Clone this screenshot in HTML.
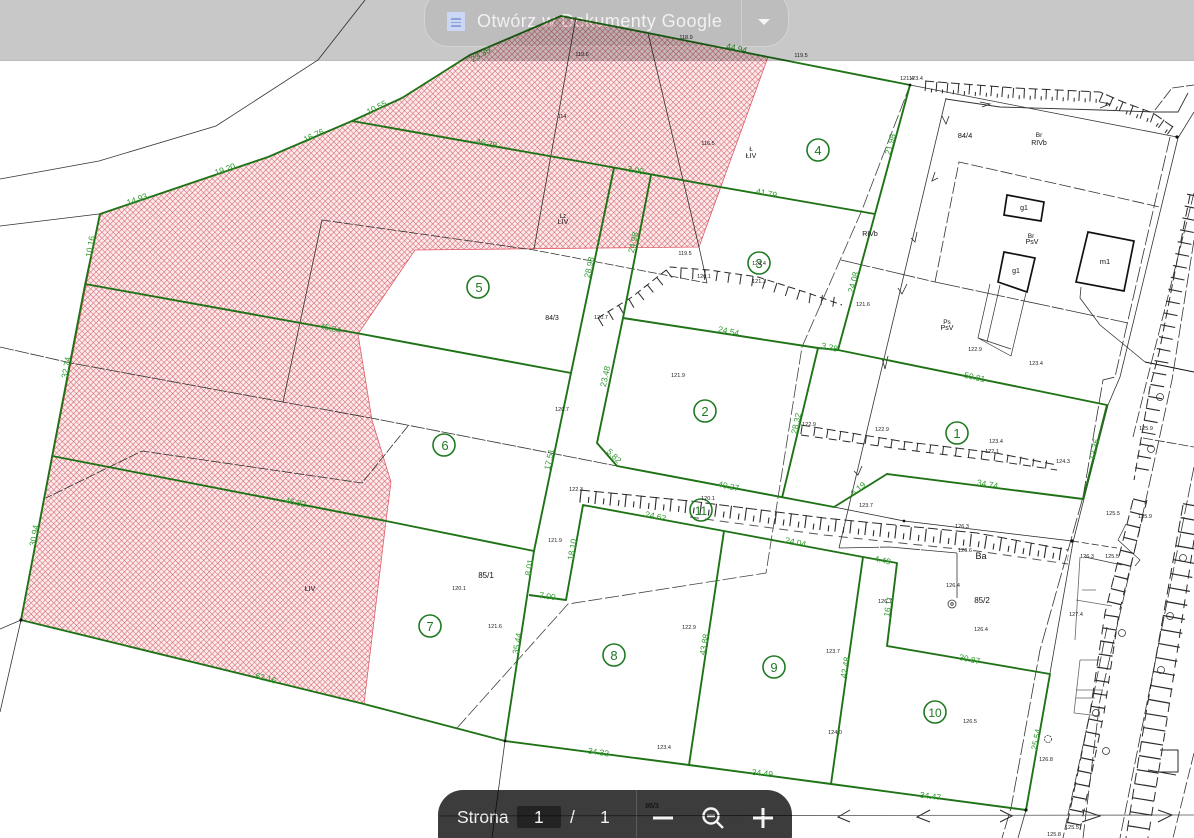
<!DOCTYPE html>
<html><head><meta charset="utf-8">
<style>
html,body{margin:0;padding:0;background:#fff}
#p{position:relative;width:1194px;height:838px;overflow:hidden;background:#fff;font-family:"Liberation Sans",sans-serif;isolation:isolate}
#bar{position:absolute;left:0;top:0;width:1194px;height:60px;background:#c8c8c8;border-bottom:1px solid #bcbcbc}
#pill{position:absolute;left:424px;top:-10px;width:363px;height:55px;border:1px solid #d4d4d4;border-radius:24px;background:#bdbdbd;box-sizing:content-box}
#dv{position:absolute;left:741px;top:0;width:1px;height:45px;background:#cfcfcf}
#doc{position:absolute;left:447px;top:12px;width:18px;height:19px;background:#ccd6f5;border-radius:1px}
#doc i{position:absolute;left:4px;width:10px;height:1.5px;background:#8ea2dc}
#t{position:absolute;left:477px;top:10px;font-size:18px;line-height:22px;color:#f1f1f1;white-space:nowrap;letter-spacing:.45px}
#car{position:absolute;left:758px;top:19px;width:0;height:0;border-left:6.5px solid transparent;border-right:6.5px solid transparent;border-top:6px solid #f6f6f6}
#bp{position:absolute;left:438px;top:790px;width:354px;height:70px;background:#3c3c3c;border-radius:25px}
#bp span{position:absolute;color:#f4f4f4;font-size:17.5px;line-height:22px;white-space:nowrap}
#box{position:absolute;left:79px;top:16px;width:44px;height:22px;background:#232323;border-radius:2px}
#bdv{position:absolute;left:198px;top:0;width:1px;height:48px;background:#5c5c5c}
#ic{position:absolute;left:0;top:0}
#map{position:absolute;left:0;top:0;mix-blend-mode:multiply;filter:blur(.35px)}
#map text{font-family:"Liberation Sans",sans-serif}
.g text{fill:#2f9a2f;font-size:8.5px;text-anchor:middle}
.k text{fill:#222;font-size:5.5px;text-anchor:middle}
.b text{fill:#111;font-size:8px;text-anchor:middle}
.n circle{fill:none;stroke:#1e7a22;stroke-width:1.6}
.n text{fill:#1e7a22;font-size:13px;text-anchor:middle}
</style></head><body>
<div id="p">
<div id="bar"></div>
<div id="pill"></div>
<div id="dv"></div>
<div id="doc"><i style="top:6px"></i><i style="top:9.5px"></i><i style="top:13px"></i></div>
<div id="t">Otwórz w Dokumenty Google</div>
<div id="car"></div>
<div id="bp">
<span style="left:19px;top:16px">Strona</span>
<div id="box"></div>
<span style="left:96px;top:16px">1</span>
<span style="left:132px;top:16px">/</span>
<span style="left:162px;top:16px">1</span>
<div id="bdv"></div>
<svg id="ic" width="354" height="48" viewBox="0 0 354 48">
<path d="M215 28h20" stroke="#f4f4f4" stroke-width="3" fill="none"/>
<circle cx="273" cy="26" r="7.5" stroke="#f4f4f4" stroke-width="2.4" fill="none"/>
<path d="M279 32l6 6M269 26h8" stroke="#f4f4f4" stroke-width="2.4" fill="none"/>
<path d="M315 28h20M325 18v20" stroke="#f4f4f4" stroke-width="3" fill="none"/>
</svg>
</div>

<svg id="map" width="1194" height="838" viewBox="0 0 1194 838" xmlns="http://www.w3.org/2000/svg">
<defs>
<pattern id="h" width="4" height="4" patternUnits="userSpaceOnUse" patternTransform="rotate(45)">
<rect width="4" height="4" fill="#fdeaea"/>
<path d="M0 0H4M0 0V4" stroke="#d4606e" stroke-width="1.1" fill="none"/>
</pattern>
</defs>

<!-- hatched area -->
<path d="M100 214L268 157L352 121L402 98L470 55L561 16L648 33L768 57L699 247L415 250L358 334L372 420L391 482L386 521L364 704L21 620Z" fill="url(#h)" stroke="#e0505c" stroke-width=".7"/>

<!-- thin lines -->
<g fill="none" stroke="#333" stroke-width=".8">
<path d="M365 0L318 60L216 126L99 161L0 179"/>
<path d="M99 214L0 226"/>
<path d="M21 620L0 629M21 620L0 712"/>
<path d="M505 741L492 838"/>
<path d="M322 220L283 402"/>
<path d="M576 17L534 249"/>
<path d="M648 33L699 247L707 283"/>
<path d="M0 347L71 363L283 402L371 418L617 466" stroke-dasharray="14 1.5"/>
<path d="M322 220L534 250L707 283" stroke-dasharray="9 2"/>
<path d="M841 260L935 282L1128 323" stroke-dasharray="30 2 12 2"/>
<path d="M408 426L362 483L142 451L46 498" stroke-dasharray="10 2"/>
<path d="M457 728L568 604L766 573L802 347L862 210L910 85" stroke="#444" stroke-dasharray="14 3"/>
<path d="M910 85L1177 137"/>
<path d="M946 98L839 548"/>
<path d="M946 99L1000 107L1100 110L1155 112L1178 112L1188 93" stroke-width=".9"/>
<path d="M1145 362L1194 372" stroke="#111" stroke-width="1.1"/>
<path d="M1081 287L1080 298L1100 325L1122 343L1145 362"/>
<path d="M440 816L1194 815" stroke="#555"/>
<path d="M839 548L890 547L957 553" stroke-dasharray="40 1"/>
<path d="M957 553V598"/>
<path d="M834 507L904 521L1072 541" stroke="#222"/>
<path d="M1072 541L1117 548" stroke-dasharray="7 3"/>
<path d="M1085 557L1122 565"/>
<!-- double dashed boundary -->
<path d="M1178 138L1120 377L1108 405L1073 542L1050 673L1026 810L1018 838"/>
<path d="M1170 137L1115 377L1103 380L1083 497L1040 650L1011 808L1002 838" stroke-dasharray="16 3"/>
<!-- road edge dashes -->
<path d="M1194 193L1147 380L1133 437" stroke-dasharray="12 3"/>
<path d="M1194 240L1172 380L1140 527L1100 700L1083 838" stroke-dasharray="14 3"/>
<path d="M1107 627L1090 713L1063 838" stroke-dasharray="12 3"/>
<path d="M1194 467L1120 838" stroke-dasharray="14 3"/>
<path d="M1194 753L1173 838" stroke-dasharray="12 3"/>
<path d="M1143 438L1194 447" stroke-dasharray="10 2"/>
<path d="M1155 110L1172 88L1194 85" stroke-dasharray="12 2"/>
<path d="M1178 138L1194 112"/>
<path d="M1080 557L1075 640M1076 600L1112 606M1074 713L1080 660M1074 713L1100 716" stroke="#666"/>
<path d="M1080 660H1100M1076 690H1102M1076 698H1095M1082 590H1096" stroke="#666"/>
<path d="M1126 524L1118 540L1140 560L1135 566" stroke-width=".7"/>
<!-- dashed building outline -->
<path d="M935 282L959 162L1160 207" stroke-dasharray="12 3"/>
<!-- small rect -->
<path d="M990 284L978 338L1011 356L1026 293M1000 285L987 342M978 338L1011 349" stroke-width=".7"/>
<circle cx="952" cy="604" r="4"/>
<circle cx="952" cy="604" r="1.3"/>
<circle cx="1048" cy="739" r="3.5" stroke-dasharray="2 1"/>
<circle cx="1122" cy="633" r="3.5"/>
<circle cx="1106" cy="751" r="3.5"/>
<circle cx="1096" cy="713" r="3.5"/>
<circle cx="1160" cy="397" r="3.5"/>
<circle cx="1151" cy="449" r="3.5"/>
<circle cx="1183" cy="558" r="3.5"/>
<circle cx="1170" cy="616" r="3.5"/>
<circle cx="1161" cy="670" r="3.5"/>
</g>

<!-- kerbs : line + U ticks -->
<g fill="none" stroke="#2a2a2a">
<path d="M925 81L1015 88L1100 92L1123 102L1153 113L1173 127" stroke-width="1" stroke-dasharray="9 4"/>
<path d="M925 86L1015 93L1100 97L1123 107L1153 118L1173 132" stroke-width="10" stroke-dasharray="1 10"/>
<path d="M925 90L1015 97L1100 101L1123 111L1153 122L1173 136" stroke-width="4" stroke-dasharray="1 10" stroke-dashoffset="5"/>
<path d="M598 318L632 297L670 267L709 270L758 277L808 293L842 305" stroke-width="1" stroke-dasharray="7 4"/>
<path d="M600 322L632 303L670 273L709 275L758 282L808 298L842 303" stroke-width="10" stroke-dasharray="1 11"/>
<path d="M801 425L900 441L996 453L1057 465" stroke-width="1" stroke-dasharray="9 4"/>
<path d="M801 430L900 445L996 457L1057 466" stroke-width="8" stroke-dasharray="1 12"/>
<path d="M801 435L900 449L996 461L1057 470" stroke-width="1" stroke-dasharray="8 6"/>
<path d="M580 490L690 501L824 518L977 533L1068 550" stroke-width="1" stroke-dasharray="10 4"/>
<path d="M580 496L690 507L824 524L977 541L1068 555" stroke-width="13" stroke-dasharray="1.1 14"/>
<path d="M580 499L690 510L824 528L977 544L1068 558" stroke-width="6" stroke-dasharray="1.1 14" stroke-dashoffset="7"/>
<path d="M690 517L824 535L977 551L1068 564" stroke-width="1" stroke-dasharray="9 6" opacity=".8"/>
<!-- road strip blocks -->
<path d="M1194 195L1163 353L1157 387L1140 480" stroke-width="14" stroke-dasharray="1.1 11"/>
<path d="M1190 195L1159 353L1150 387L1134 480" stroke-width="1" stroke-dasharray="9 4"/>
<path d="M1140 500L1112 613L1097 713L1073 830" stroke-width="14" stroke-dasharray="1.2 12"/>
<path d="M1133 500L1105 613L1090 713L1066 830" stroke-width="1" stroke-dasharray="10 6"/>
<path d="M1147 500L1119 613L1104 713L1080 830" stroke-width="1" stroke-dasharray="8 7"/>
<path d="M1194 505L1157 713L1137 838" stroke-width="22" stroke-dasharray="1.2 13"/>
<path d="M1183 505L1146 713L1126 838" stroke-width="1" stroke-dasharray="11 5"/>
<path d="M1194 540L1168 713L1148 838" stroke-width="1" stroke-dasharray="9 6"/>
<path d="M1160 750H1178V772H1160M1148 770L1176 775" stroke-width="1"/>
<!-- arrows on axis -->
<path d="M850 810L838 817L850 822M930 810L917 817L930 822M1000 810L1012 816L1000 822M1082 810L1100 816L1082 822M1158 810L1172 815L1158 822" stroke-width="1"/>
<path d="M942 116L946 124L949 116M935 172L932 181L938 178M917 232L915 242L911 238M907 284L902 294L898 288M888 356L885 369L882 358M862 466L858 475L854 471" stroke-width=".8"/>
<path d="M980 102L990 104L982 107M1100 102L1110 104L1100 108" stroke-width=".8"/>
</g>

<!-- buildings -->
<g fill="none" stroke="#111" stroke-width="1.7">
<path d="M1007 195L1044 202L1041 221L1004 215Z"/>
<path d="M1004 252L1035 258L1027 292L998 282Z"/>
<path d="M1088 232L1134 241L1124 291L1076 282Z"/>
</g>

<!-- green plot lines -->
<g fill="none" stroke="#1f7316" stroke-width="1.9" stroke-linejoin="round">
<path d="M21 620L52 457L85 285L100 214L268 157L352 121L402 98L470 55L561 16L648 33L768 57L910 85"/>
<path d="M352 121L600 165L720 187L875 214"/>
<path d="M85 284L356 333L571 373"/>
<path d="M52 456L386 521L534 551"/>
<path d="M21 620L364 704L505 741L689 765L831 784L1026 810L1050 674L887 646L897 563L863 557L724 531L583 505L566 600L529 595"/>
<path d="M910 85L875 214L838 350"/>
<path d="M623 318L818 348L838 350L1107 405L1083 499L887 474L834 507L617 466L597 443L623 318L651 175"/>
<path d="M818 348L782 498"/>
<path d="M614 168L571 373L534 551L505 741"/>
<path d="M724 531L689 765"/>
<path d="M863 557L831 784"/>
</g>
<g fill="#111"><circle cx="21" cy="620" r="1.6"/><circle cx="505" cy="741" r="1.4"/><circle cx="910" cy="85" r="1.4"/><circle cx="1026" cy="810" r="1.6"/><circle cx="1072" cy="541" r="1.6"/><circle cx="1177" cy="137" r="1.6"/><circle cx="904" cy="521" r="1.4"/></g>

<!-- green measurements -->
<g class="g">
<text transform="translate(482,57) rotate(-30)">23.35</text>
<text transform="translate(378,110) rotate(-27)">10.55</text>
<text transform="translate(315,138) rotate(-25)">16.76</text>
<text transform="translate(226,172) rotate(-20)">19.20</text>
<text transform="translate(138,202) rotate(-20)">14.93</text>
<text transform="translate(93,247) rotate(-80)">10.16</text>
<text transform="translate(69,368) rotate(-80)">32.74</text>
<text transform="translate(37,536) rotate(-80)">30.94</text>
<text transform="translate(486,146) rotate(11)">46.29</text>
<text transform="translate(330,331) rotate(12)">45.94</text>
<text transform="translate(295,505) rotate(12)">46.82</text>
<text transform="translate(265,681) rotate(15)">62.16</text>
<text transform="translate(598,755) rotate(8)">34.32</text>
<text transform="translate(762,776) rotate(7)">34.49</text>
<text transform="translate(930,799) rotate(8)">34.47</text>
<text transform="translate(736,51) rotate(12)">44.94</text>
<text transform="translate(893,145) rotate(-75)">21.98</text>
<text transform="translate(766,196) rotate(11)">41.79</text>
<text transform="translate(635,173) rotate(11)">3.00</text>
<text transform="translate(636,243) rotate(-78)">24.98</text>
<text transform="translate(592,268) rotate(-78)">28.98</text>
<text transform="translate(856,283) rotate(-75)">24.08</text>
<text transform="translate(728,334) rotate(12)">24.54</text>
<text transform="translate(829,350) rotate(12)">3.28</text>
<text transform="translate(974,380) rotate(12)">50.81</text>
<text transform="translate(608,377) rotate(-78)">23.48</text>
<text transform="translate(799,424) rotate(-78)">28.32</text>
<text transform="translate(1097,450) rotate(-76)">13.35</text>
<text transform="translate(612,458) rotate(45)">5.82</text>
<text transform="translate(728,489) rotate(12)">40.27</text>
<text transform="translate(860,491) rotate(-40)">6.19</text>
<text transform="translate(987,487) rotate(10)">34.74</text>
<text transform="translate(552,460) rotate(-78)">17.51</text>
<text transform="translate(655,519) rotate(12)">24.62</text>
<text transform="translate(795,545) rotate(12)">24.04</text>
<text transform="translate(882,563) rotate(12)">4.49</text>
<text transform="translate(575,550) rotate(-80)">18.10</text>
<text transform="translate(532,568) rotate(-80)">8.01</text>
<text transform="translate(547,599) rotate(8)">7.00</text>
<text transform="translate(891,607) rotate(-80)">16.11</text>
<text transform="translate(520,644) rotate(-80)">35.44</text>
<text transform="translate(707,645) rotate(-80)">43.88</text>
<text transform="translate(848,668) rotate(-80)">42.48</text>
<text transform="translate(969,662) rotate(12)">30.87</text>
<text transform="translate(1039,740) rotate(-78)">25.54</text>
</g>

<!-- circled numbers -->
<g class="n">
<circle cx="818" cy="150" r="11"/><text x="818" y="155">4</text>
<circle cx="759" cy="263" r="11"/><text x="759" y="268">3</text>
<circle cx="478" cy="287" r="11"/><text x="479" y="292">5</text>
<circle cx="444" cy="445" r="11"/><text x="445" y="450">6</text>
<circle cx="430" cy="626" r="11"/><text x="430" y="631">7</text>
<circle cx="614" cy="655" r="11"/><text x="614" y="660">8</text>
<circle cx="774" cy="667" r="11"/><text x="774" y="672">9</text>
<circle cx="935" cy="712" r="11"/><text x="935" y="717" style="font-size:12px">10</text>
<circle cx="705" cy="411" r="11"/><text x="705" y="416">2</text>
<circle cx="957" cy="433" r="11"/><text x="957" y="438">1</text>
<circle cx="701" cy="510" r="11"/><text x="701" y="515" style="font-size:12px">11</text>
</g>

<!-- black labels -->
<g class="b">
<text x="552" y="320" style="font-size:7px">84/3</text>
<text x="965" y="138" style="font-size:7.5px">84/4</text>
<text x="486" y="578" style="font-size:8px">85/1</text>
<text x="982" y="603" style="font-size:8px">85/2</text>
<text x="981" y="559" style="font-size:9px">Ba</text>
<text x="1105" y="264" style="font-size:7.5px">m1</text>
<text x="1024" y="210" style="font-size:7px">g1</text>
<text x="1016" y="273" style="font-size:7px">g1</text>
<text x="1039" y="137" style="font-size:6.5px">Br</text>
<text x="1039" y="145" style="font-size:7px">RIVb</text>
<text x="1031" y="238" style="font-size:6.5px">Br</text>
<text x="1032" y="244" style="font-size:7px">PsV</text>
<text x="947" y="324" style="font-size:6.5px">Ps</text>
<text x="947" y="330" style="font-size:7px">PsV</text>
<text x="870" y="236" style="font-size:7px">RIVb</text>
<text x="751" y="151" style="font-size:6px">Ł</text>
<text x="751" y="158" style="font-size:7px">ŁIV</text>
<text x="563" y="218" style="font-size:6px">Lz</text>
<text x="563" y="224" style="font-size:7px">LIV</text>
<text x="310" y="591" style="font-size:7px">ŁIV</text>
<text x="652" y="808" style="font-size:7px">86/3</text>
</g>
<g class="k">
<text x="582" y="56">119.6</text><text x="686" y="39">118.9</text><text x="801" y="57">119.5</text>
<text x="907" y="80">121.4</text><text x="916" y="80">123.4</text><text x="562" y="118">114</text>
<text x="708" y="145">116.5</text><text x="685" y="255">119.5</text><text x="704" y="278">120.1</text>
<text x="759" y="265">120.4</text><text x="759" y="283">121.3</text><text x="863" y="306">121.6</text>
<text x="601" y="319">120.7</text><text x="678" y="377">121.9</text><text x="562" y="411">120.7</text>
<text x="975" y="351">122.9</text><text x="1036" y="365">123.4</text><text x="882" y="431">122.9</text>
<text x="809" y="426">122.9</text><text x="996" y="443">123.4</text><text x="992" y="453">122.1</text>
<text x="1063" y="463">124.3</text><text x="866" y="507">123.7</text><text x="708" y="500">120.1</text>
<text x="576" y="491">122.3</text><text x="962" y="528">126.3</text><text x="965" y="552">126.6</text>
<text x="953" y="587">126.4</text><text x="981" y="631">126.4</text><text x="885" y="603">126.7</text>
<text x="555" y="542">121.9</text><text x="459" y="590">120.1</text><text x="495" y="628">121.6</text>
<text x="689" y="629">122.9</text><text x="833" y="653">123.7</text><text x="835" y="734">124.0</text>
<text x="664" y="749">123.4</text><text x="970" y="723">126.5</text><text x="1046" y="761">126.8</text>
<text x="1076" y="616">127.4</text><text x="1087" y="558">126.3</text><text x="1112" y="558">125.5</text>
<text x="1113" y="515">125.5</text><text x="1145" y="518">125.9</text><text x="1146" y="430">125.9</text>
<text x="1054" y="836">125.8</text><text x="1072" y="829">125.5</text>
</g>
</svg>
</div>
</body></html>
